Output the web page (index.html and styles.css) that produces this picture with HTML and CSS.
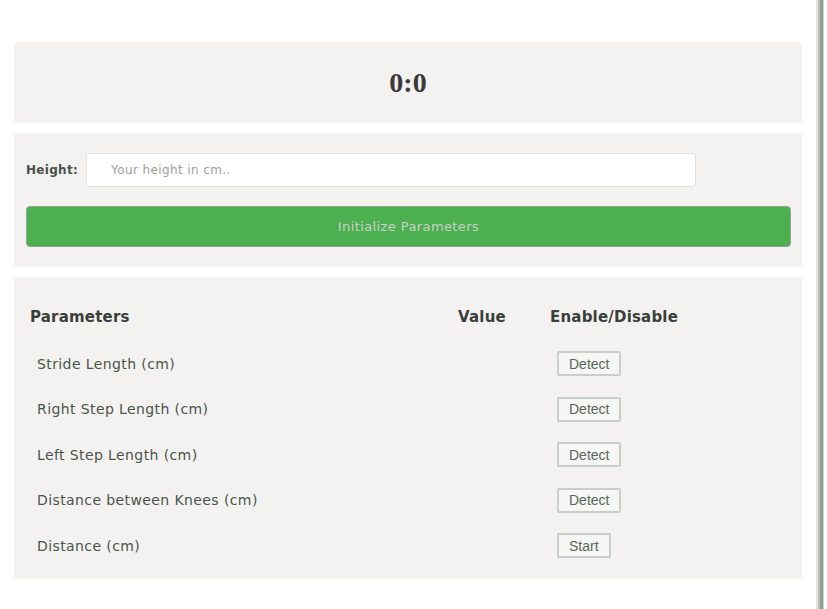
FILE: index.html
```html
<!DOCTYPE html>
<html>
<head>
<meta charset="utf-8">
<link rel="stylesheet" href="styles.css">
</head>
<body>
<div class="window">
  <main class="page">
    <section class="card timer">0:0</section>
    <section class="card setup">
      <div class="height-row">
        <label class="height-label" for="h">Height:</label>
        <input id="h" class="height-input" type="text" placeholder="Your height in cm..">
      </div>
      <button class="init-btn">Initialize Parameters</button>
    </section>
    <section class="card params">
      <div class="grid">
        <div class="hd">Parameters</div>
        <div class="hd">Value</div>
        <div class="hd">Enable/Disable</div>

        <div class="cell name">Stride Length (cm)</div>
        <div class="cell"></div>
        <div class="cell act"><button class="small-btn">Detect</button></div>

        <div class="cell name">Right Step Length (cm)</div>
        <div class="cell"></div>
        <div class="cell act"><button class="small-btn">Detect</button></div>

        <div class="cell name">Left Step Length (cm)</div>
        <div class="cell"></div>
        <div class="cell act"><button class="small-btn">Detect</button></div>

        <div class="cell name">Distance between Knees (cm)</div>
        <div class="cell"></div>
        <div class="cell act"><button class="small-btn">Detect</button></div>

        <div class="cell name">Distance (cm)</div>
        <div class="cell"></div>
        <div class="cell act"><button class="small-btn">Start</button></div>
      </div>
    </section>
  </main>
  <div class="edge"></div>
</div>
</body>
</html>
```

FILE: styles.css
```css
html, body {
  margin: 0;
  padding: 0;
  background: #ffffff;
}
body {
  font-family: "DejaVu Sans", "Open Sans", sans-serif;
  color: #3f473f;
}
.window {
  display: flex;
  height: 609px;
  width: 827px;
  overflow: hidden;
}
.page {
  width: 788px;
  padding: 42px 14px 0 14px;
  display: flex;
  flex-direction: column;
  gap: 10px;
}
.edge {
  width: 8px;
  margin-right: 3px;
  background: linear-gradient(to right, #e4e8e4 0, #e4e8e4 2px, #b9c4b9 2px, #b9c4b9 4px, #8f9e8f 4px, #8f9e8f 7px, #cfd6cf 7px);
}
.card {
  background: #f3f2f1;
  border-radius: 4px;
}
.timer {
  height: 81px;
  display: flex;
  align-items: center;
  justify-content: center;
  font-family: "Liberation Serif", "Times New Roman", serif;
  font-weight: bold;
  font-size: 28px;
  color: #3a3a3a;
}
.setup {
  padding: 20px 11px 20px 12px;
  display: flex;
  flex-direction: column;
  gap: 19px;
}
.height-row {
  display: flex;
  align-items: center;
  gap: 7px;
}
.height-label {
  font-size: 12px;
  font-weight: bold;
  letter-spacing: 0.3px;
  color: #4a524a;
  width: 53px;
}
.height-input {
  width: 610px;
  height: 34px;
  box-sizing: border-box;
  border: 1px solid #e3e3e1;
  border-radius: 3px;
  background: #ffffff;
  padding: 0 0 0 24px;
  font-family: "DejaVu Sans", sans-serif;
  font-size: 12px;
  letter-spacing: 0.4px;
  outline: none;
}
.height-input::placeholder {
  color: #9aa29a;
}
.init-btn {
  height: 41px;
  width: 100%;
  border: 1px solid #8fa88f;
  border-radius: 4px;
  background: #4caf50;
  color: #c9cfc9;
  font-family: "DejaVu Sans", sans-serif;
  font-size: 13px;
  letter-spacing: 0.4px;
  box-shadow: inset 0 -1px 0 #5aa45a;
}
.params {
  height: 302px;
  box-sizing: border-box;
  padding: 16px 0 0 16px;
}
.grid {
  display: grid;
  grid-template-columns: 428px 92px auto;
  grid-template-rows: 48px repeat(5, 45.5px);
}
.hd {
  font-size: 15px;
  font-weight: bold;
  letter-spacing: 0.2px;
  color: #3a3f3a;
  display: flex;
  align-items: center;
}
.cell {
  display: flex;
  align-items: center;
  padding-left: 7px;
}
.name {
  font-size: 14px;
  letter-spacing: 0.4px;
  color: #4a554a;
}
.small-btn {
  height: 25px;
  padding: 0 10px;
  border: 2px solid #c8cec8;
  border-radius: 2px;
  background: #f6f6f5;
  font-family: "Liberation Sans", Arial, sans-serif;
  font-size: 14px;
  letter-spacing: 0;
  color: #5a665a;
}
```
